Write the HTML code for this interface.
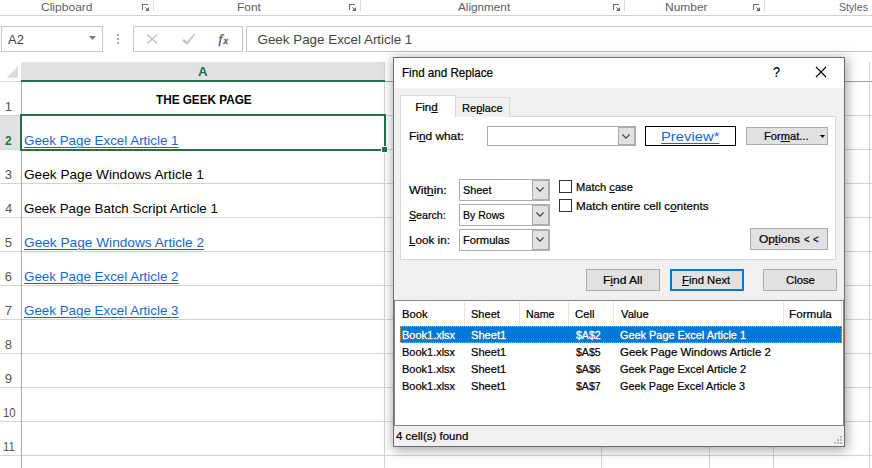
<!DOCTYPE html>
<html><head><meta charset="utf-8"><title>Excel Find and Replace</title>
<style>
html,body{margin:0;padding:0;overflow:hidden;}
body{width:872px;height:468px;overflow:hidden;background:#fff;position:relative;font-family:"Liberation Sans",sans-serif;}
.a{position:absolute;box-sizing:border-box;}
.t{position:absolute;white-space:nowrap;line-height:1;transform-origin:0 50%;font-family:"Liberation Sans",sans-serif;}
.t u{text-decoration:underline;text-underline-offset:0.5px;}
.hl{position:absolute;height:1px;background:#d4d4d4;}
.vl{position:absolute;width:1px;background:#d4d4d4;}
.btn{position:absolute;box-sizing:border-box;background:#e1e1e1;border:1px solid #adadad;}
.combo{position:absolute;box-sizing:border-box;background:#fff;border:1px solid #abadb3;}
.cbtn{position:absolute;box-sizing:border-box;background:#e1e1e1;border:1px solid #adadad;}
.chk{position:absolute;box-sizing:border-box;width:13px;height:13px;background:#fff;border:1px solid #333;}
svg{position:absolute;overflow:visible;}

</style></head>
<body>
<!-- ribbon strip -->
<div class="hl" style="left:0;top:15px;width:872px;background:#d2d2d2"></div>
<div class="vl" style="left:153px;top:0;height:11px;background:#dcdcdc"></div>
<div class="vl" style="left:360px;top:0;height:11px;background:#dcdcdc"></div>
<div class="vl" style="left:624px;top:0;height:11px;background:#dcdcdc"></div>
<div class="vl" style="left:764px;top:0;height:11px;background:#dcdcdc"></div>
<svg style="left:142px;top:4px" width="8" height="8" viewBox="0 0 8 8"><rect x="0" y="0" width="6" height="1" fill="#6a6a6a"/><rect x="0" y="0" width="1" height="6" fill="#6a6a6a"/><path d="M7 3V7H3Z" fill="#6a6a6a"/><path d="M3.3 3.3L6 6" stroke="#6a6a6a" stroke-width="1" fill="none"/></svg>
<svg style="left:349px;top:4px" width="8" height="8" viewBox="0 0 8 8"><rect x="0" y="0" width="6" height="1" fill="#6a6a6a"/><rect x="0" y="0" width="1" height="6" fill="#6a6a6a"/><path d="M7 3V7H3Z" fill="#6a6a6a"/><path d="M3.3 3.3L6 6" stroke="#6a6a6a" stroke-width="1" fill="none"/></svg>
<svg style="left:613px;top:4px" width="8" height="8" viewBox="0 0 8 8"><rect x="0" y="0" width="6" height="1" fill="#6a6a6a"/><rect x="0" y="0" width="1" height="6" fill="#6a6a6a"/><path d="M7 3V7H3Z" fill="#6a6a6a"/><path d="M3.3 3.3L6 6" stroke="#6a6a6a" stroke-width="1" fill="none"/></svg>
<svg style="left:753px;top:4px" width="8" height="8" viewBox="0 0 8 8"><rect x="0" y="0" width="6" height="1" fill="#6a6a6a"/><rect x="0" y="0" width="1" height="6" fill="#6a6a6a"/><path d="M7 3V7H3Z" fill="#6a6a6a"/><path d="M3.3 3.3L6 6" stroke="#6a6a6a" stroke-width="1" fill="none"/></svg>

<!-- formula bar -->
<div class="a" style="left:1px;top:26px;width:102px;height:26px;border:1px solid #c6c6c6;background:#fff"></div>
<svg style="left:89px;top:36px" width="8" height="4" viewBox="0 0 8 4"><path d="M0 0H7L3.5 3.9Z" fill="#777"/></svg>
<div class="a" style="left:117px;top:34px;width:2px;height:2px;background:#a6a6a6"></div>
<div class="a" style="left:117px;top:38px;width:2px;height:2px;background:#a6a6a6"></div>
<div class="a" style="left:117px;top:42px;width:2px;height:2px;background:#a6a6a6"></div>
<div class="a" style="left:133px;top:26px;width:110px;height:26px;border:1px solid #c6c6c6;background:#fff"></div>
<svg style="left:147px;top:34px" width="11" height="10" viewBox="0 0 11 10"><path d="M0.3 0.5L10 9.5M10 0.5L0.3 9.5" fill="none" stroke="#c4c4c4" stroke-width="1.7"/></svg>
<svg style="left:181px;top:33px" width="15" height="12" viewBox="0 0 15 12"><path d="M1 8L2.9 5.9L6 8.8L13.2 0.6L14.2 1.5L6.3 11.8Z" fill="#c4c4c4"/></svg>
<span class="t" style="left:218.5px;top:31.5px;font-family:'Liberation Serif',serif;font-style:italic;font-size:13.5px;color:#5a5a5a;-webkit-text-stroke:0.4px #5a5a5a">f</span>
<span class="t" style="left:223.5px;top:36px;font-family:'Liberation Serif',serif;font-style:italic;font-size:10px;color:#5a5a5a;-webkit-text-stroke:0.4px #5a5a5a">x</span>
<div class="a" style="left:246px;top:26px;width:626px;height:26px;border:1px solid #c6c6c6;border-right:none;background:#fff"></div>

<!-- sheet -->
<div class="a" style="left:21px;top:62px;width:364px;height:18px;background:#e1e1e1"></div>
<svg style="left:6px;top:66px" width="12" height="12" viewBox="0 0 12 12"><path d="M12 0.3V11.8H0.5Z" fill="#dcdcdc"/></svg>
<div class="a" style="left:0;top:116px;width:21px;height:34px;background:#e1e1e1"></div>
<!-- grid horizontal -->
<div class="hl" style="left:0;top:81px;width:21px;"></div>
<div class="hl" style="left:385px;top:81px;width:487px;background:#a0a0a0"></div>
<div class="hl" style="left:0;top:115px;width:872px;"></div>
<div class="hl" style="left:0;top:149px;width:872px;"></div>
<div class="hl" style="left:0;top:183px;width:872px;"></div>
<div class="hl" style="left:0;top:217px;width:872px;"></div>
<div class="hl" style="left:0;top:251px;width:872px;"></div>
<div class="hl" style="left:0;top:285px;width:872px;"></div>
<div class="hl" style="left:0;top:319px;width:872px;"></div>
<div class="hl" style="left:0;top:353px;width:872px;"></div>
<div class="hl" style="left:0;top:387px;width:872px;"></div>
<div class="hl" style="left:0;top:421px;width:872px;"></div>
<div class="hl" style="left:0;top:455px;width:872px;"></div>
<!-- grid vertical -->
<div class="vl" style="left:21px;top:82px;height:386px;background:#ababab"></div>
<div class="vl" style="left:384px;top:62px;height:406px;"></div>
<div class="vl" style="left:601px;top:62px;height:406px;"></div>
<div class="vl" style="left:709px;top:62px;height:406px;"></div>
<div class="vl" style="left:773px;top:62px;height:406px;"></div>
<div class="vl" style="left:869px;top:62px;height:406px;"></div>
<!-- col header green line -->
<div class="a" style="left:21px;top:80px;width:364px;height:2px;background:#217346"></div>
<!-- selection -->
<div class="a" style="left:20px;top:114px;width:366px;height:37px;border:2px solid #217346;"></div>
<div class="a" style="left:381px;top:146px;width:7px;height:7px;background:#217346;border:1px solid #fff"></div>

<!-- dialog shadow + frame -->
<div class="a" style="left:393px;top:57px;width:452px;height:390px;background:#f0f0f0;border:1px solid #6e6e6e;box-shadow:1px 2px 11px 1px rgba(0,0,0,0.36)"></div>
<div class="a" style="left:394px;top:58px;width:450px;height:30px;background:#fff"></div>
<svg style="left:816px;top:67px" width="10" height="10" viewBox="0 0 10 10"><path d="M0 0L10 10M10 0L0 10" fill="none" stroke="#000" stroke-width="1.1"/></svg>
<!-- tab panel -->
<div class="a" style="left:400px;top:116px;width:436px;height:144px;background:#fff;border:1px solid #d9d9d9"></div>
<div class="a" style="left:455px;top:97px;width:55px;height:20px;background:#f0f0f0;border:1px solid #d9d9d9;border-bottom:none"></div>
<div class="a" style="left:400px;top:95px;width:56px;height:22px;background:#fff;border:1px solid #d9d9d9;border-bottom:none"></div>
<!-- find what combo -->
<div class="combo" style="left:487px;top:126px;width:149px;height:20px"></div>
<div class="cbtn" style="left:618px;top:127px;width:17px;height:18px"></div>
<svg style="left:622px;top:134px" width="8" height="5" viewBox="0 0 8 5"><path d="M0.4 0.5L4 4.1L7.6 0.5" fill="none" stroke="#404040" stroke-width="1.1"/></svg>
<!-- preview -->
<div class="a" style="left:645px;top:126px;width:91px;height:20px;background:#fff;border:1px solid #000"></div>
<!-- format button -->
<div class="btn" style="left:746px;top:127px;width:82px;height:18px"></div>
<svg style="left:820px;top:135px" width="5" height="3" viewBox="0 0 5 3"><path d="M0 0H5L2.5 2.9Z" fill="#000"/></svg>
<!-- combos -->
<div class="combo" style="left:459px;top:179px;width:91px;height:22px"></div>
<div class="cbtn" style="left:532px;top:180px;width:17px;height:20px"></div>
<svg style="left:536px;top:187px" width="8" height="5" viewBox="0 0 8 5"><path d="M0.4 0.5L4 4.1L7.6 0.5" fill="none" stroke="#404040" stroke-width="1.1"/></svg>
<div class="combo" style="left:459px;top:204px;width:91px;height:22px"></div>
<div class="cbtn" style="left:532px;top:205px;width:17px;height:20px"></div>
<svg style="left:536px;top:212px" width="8" height="5" viewBox="0 0 8 5"><path d="M0.4 0.5L4 4.1L7.6 0.5" fill="none" stroke="#404040" stroke-width="1.1"/></svg>
<div class="combo" style="left:459px;top:229px;width:91px;height:22px"></div>
<div class="cbtn" style="left:532px;top:230px;width:17px;height:20px"></div>
<svg style="left:536px;top:237px" width="8" height="5" viewBox="0 0 8 5"><path d="M0.4 0.5L4 4.1L7.6 0.5" fill="none" stroke="#404040" stroke-width="1.1"/></svg>
<!-- checkboxes -->
<div class="chk" style="left:559px;top:180px"></div>
<div class="chk" style="left:559px;top:199px"></div>
<!-- options -->
<div class="btn" style="left:750px;top:228px;width:78px;height:22px"></div>
<!-- bottom buttons -->
<div class="btn" style="left:586px;top:269px;width:74px;height:22px"></div>
<div class="btn" style="left:670px;top:269px;width:74px;height:22px;border:2px solid #0078d7"></div>
<div class="btn" style="left:763px;top:269px;width:74px;height:22px"></div>
<!-- result list -->
<div class="a" style="left:394px;top:300px;width:450px;height:126px;background:#fff;border:1px solid #828790"></div>
<div class="vl" style="left:464px;top:302px;height:24px;background:#e5e5e5"></div>
<div class="vl" style="left:519px;top:302px;height:24px;background:#e5e5e5"></div>
<div class="vl" style="left:568px;top:302px;height:24px;background:#e5e5e5"></div>
<div class="vl" style="left:613px;top:302px;height:24px;background:#e5e5e5"></div>
<div class="vl" style="left:783px;top:302px;height:24px;background:#e5e5e5"></div>
<div class="vl" style="left:841px;top:302px;height:24px;background:#e5e5e5"></div>
<div class="a" style="left:400px;top:326px;width:442px;height:17px;background:#0078d7;outline:1px dotted #ff9a3c;outline-offset:-1px"></div>
<!-- size grip -->
<svg style="left:833px;top:435px" width="10" height="10" viewBox="0 0 10 10"><g fill="#b8b8b8"><rect x="7" y="1" width="2" height="2"/><rect x="4" y="4" width="2" height="2"/><rect x="7" y="4" width="2" height="2"/><rect x="1" y="7" width="2" height="2"/><rect x="4" y="7" width="2" height="2"/><rect x="7" y="7" width="2" height="2"/></g></svg>

<div id="texts">
<span class="t" style="left:40.54px;top:2.00px;font-size:11.4px;color:#5e5e5e;transform:scaleX(1.0574);">Clipboard</span>
<span class="t" style="left:236.85px;top:2.00px;font-size:11.4px;color:#5e5e5e;transform:scaleX(1.0500);">Font</span>
<span class="t" style="left:458.00px;top:2.00px;font-size:11.4px;color:#5e5e5e;transform:scaleX(1.0294);">Alignment</span>
<span class="t" style="left:664.95px;top:2.00px;font-size:11.4px;color:#5e5e5e;transform:scaleX(1.0513);">Number</span>
<span class="t" style="left:839.07px;top:2.00px;font-size:11.4px;color:#5e5e5e;transform:scaleX(0.9333);">Styles</span>
<span class="t" style="left:8.30px;top:33.00px;font-size:13.2px;color:#444;transform:scaleX(0.9812);">A2</span>
<span class="t" style="left:257.50px;top:33.00px;font-size:13.4px;color:#444;transform:scaleX(1.0000);">Geek Page Excel Article 1</span>
<span class="t" style="left:198.20px;top:65.00px;font-size:13px;color:#217346;transform:scaleX(1.0222);font-weight:bold">A</span>
<span class="t" style="left:4.80px;top:100.00px;font-size:13px;color:#555;transform:scaleX(1.0000);">1</span>
<span class="t" style="left:5.40px;top:134.00px;font-size:13px;color:#217346;transform:scaleX(0.9286);font-weight:bold">2</span>
<span class="t" style="left:4.80px;top:168.00px;font-size:13px;color:#555;transform:scaleX(1.0000);">3</span>
<span class="t" style="left:5.00px;top:202.00px;font-size:13px;color:#555;transform:scaleX(1.0000);">4</span>
<span class="t" style="left:4.80px;top:236.00px;font-size:13px;color:#555;transform:scaleX(1.0000);">5</span>
<span class="t" style="left:4.80px;top:270.00px;font-size:13px;color:#555;transform:scaleX(1.0000);">6</span>
<span class="t" style="left:4.80px;top:304.00px;font-size:13px;color:#555;transform:scaleX(1.0000);">7</span>
<span class="t" style="left:4.80px;top:338.00px;font-size:13px;color:#555;transform:scaleX(1.0000);">8</span>
<span class="t" style="left:4.80px;top:372.00px;font-size:13px;color:#555;transform:scaleX(1.0000);">9</span>
<span class="t" style="left:2.52px;top:406.00px;font-size:13px;color:#555;transform:scaleX(0.8769);">10</span>
<span class="t" style="left:2.93px;top:440.00px;font-size:13px;color:#555;transform:scaleX(0.8667);">11</span>
<span class="t" style="left:155.60px;top:93.00px;font-size:13px;color:#000;transform:scaleX(0.9028);font-weight:bold">THE GEEK PAGE</span>
<span class="t" style="left:24.30px;top:134.00px;font-size:13.4px;color:#1868cc;transform:scaleX(0.9980);text-decoration:underline;text-underline-offset:2px;text-decoration-thickness:1px">Geek Page Excel Article 1</span>
<span class="t" style="left:24.28px;top:168.00px;font-size:13.4px;color:#000;transform:scaleX(1.0189);">Geek Page Windows Article 1</span>
<span class="t" style="left:24.30px;top:202.00px;font-size:13.4px;color:#000;transform:scaleX(0.9984);">Geek Page Batch Script Article 1</span>
<span class="t" style="left:24.28px;top:236.00px;font-size:13.4px;color:#1868cc;transform:scaleX(1.0211);text-decoration:underline;text-underline-offset:2px;text-decoration-thickness:1px">Geek Page Windows Article 2</span>
<span class="t" style="left:24.30px;top:270.00px;font-size:13.4px;color:#1868cc;transform:scaleX(0.9980);text-decoration:underline;text-underline-offset:2px;text-decoration-thickness:1px">Geek Page Excel Article 2</span>
<span class="t" style="left:24.30px;top:304.00px;font-size:13.4px;color:#1868cc;transform:scaleX(0.9980);text-decoration:underline;text-underline-offset:2px;text-decoration-thickness:1px">Geek Page Excel Article 3</span>
<span class="t" style="left:401.78px;top:67.00px;font-size:12.6px;color:#000;transform:scaleX(0.9227);-webkit-text-stroke:0.22px #000;">Find and Replace</span>
<span class="t" style="left:772.70px;top:65.00px;font-size:14px;color:#000;transform:scaleX(0.9000);-webkit-text-stroke:0.2px #000">?</span>
<span class="t" style="left:415.20px;top:101.00px;font-size:11.6px;color:#000;transform:scaleX(1.0000);-webkit-text-stroke:0.22px #000;">Fin<u>d</u></span>
<span class="t" style="left:461.55px;top:102.00px;font-size:11.6px;color:#000;transform:scaleX(0.9537);-webkit-text-stroke:0.22px #000;">Re<u>p</u>lace</span>
<span class="t" style="left:408.98px;top:130.00px;font-size:11.6px;color:#000;transform:scaleX(1.0231);-webkit-text-stroke:0.22px #000;">Fi<u>n</u>d what:</span>
<span class="t" style="left:660.70px;top:130.00px;font-size:13.5px;color:#1868cc;transform:scaleX(1.0962);text-decoration:underline;text-underline-offset:2px;text-decoration-thickness:1px">Preview*</span>
<span class="t" style="left:764.24px;top:130.00px;font-size:11.6px;color:#000;transform:scaleX(0.9600);-webkit-text-stroke:0.22px #000;">For<u>m</u>at...</span>
<span class="t" style="left:409.40px;top:184.00px;font-size:11.6px;color:#000;transform:scaleX(1.0657);-webkit-text-stroke:0.22px #000;">Wit<u>h</u>in:</span>
<span class="t" style="left:409.48px;top:209.00px;font-size:11.6px;color:#000;transform:scaleX(0.9158);-webkit-text-stroke:0.22px #000;"><u>S</u>earch:</span>
<span class="t" style="left:409.19px;top:234.00px;font-size:11.6px;color:#000;transform:scaleX(1.0077);-webkit-text-stroke:0.22px #000;"><u>L</u>ook in:</span>
<span class="t" style="left:462.66px;top:184.00px;font-size:11.6px;color:#000;transform:scaleX(0.9379);-webkit-text-stroke:0.22px #000;">Sheet</span>
<span class="t" style="left:462.69px;top:209.00px;font-size:11.6px;color:#000;transform:scaleX(0.9089);-webkit-text-stroke:0.22px #000;">By Rows</span>
<span class="t" style="left:462.63px;top:234.00px;font-size:11.6px;color:#000;transform:scaleX(0.9660);-webkit-text-stroke:0.22px #000;">Formulas</span>
<span class="t" style="left:576.04px;top:181.00px;font-size:11.6px;color:#000;transform:scaleX(0.9586);-webkit-text-stroke:0.22px #000;">Match <u>c</u>ase</span>
<span class="t" style="left:575.99px;top:200.00px;font-size:11.6px;color:#000;transform:scaleX(1.0077);-webkit-text-stroke:0.22px #000;">Match entire cell c<u>o</u>ntents</span>
<span class="t" style="left:758.50px;top:233.00px;font-size:11.6px;color:#000;transform:scaleX(1.0250);-webkit-text-stroke:0.22px #000;">Op<u>t</u>ions</span>
<span class="t" style="left:804.40px;top:233.00px;font-size:11.6px;color:#000;transform:scaleX(0.8333);-webkit-text-stroke:0.22px #000;">&lt;</span>
<span class="t" style="left:812.60px;top:233.00px;font-size:11.6px;color:#000;transform:scaleX(0.8333);-webkit-text-stroke:0.22px #000;">&lt;</span>
<span class="t" style="left:602.96px;top:274.00px;font-size:11.6px;color:#000;transform:scaleX(1.0351);-webkit-text-stroke:0.22px #000;">F<u>i</u>nd All</span>
<span class="t" style="left:682.03px;top:274.00px;font-size:11.6px;color:#000;transform:scaleX(0.9714);-webkit-text-stroke:0.22px #000;"><u>F</u>ind Next</span>
<span class="t" style="left:785.52px;top:274.00px;font-size:11.6px;color:#000;transform:scaleX(0.9750);-webkit-text-stroke:0.22px #000;">Close</span>
<span class="t" style="left:401.73px;top:308.00px;font-size:11.6px;color:#000;transform:scaleX(0.9680);-webkit-text-stroke:0.22px #000;">Book</span>
<span class="t" style="left:470.85px;top:308.00px;font-size:11.6px;color:#000;transform:scaleX(0.9517);-webkit-text-stroke:0.22px #000;">Sheet</span>
<span class="t" style="left:525.78px;top:308.00px;font-size:11.6px;color:#000;transform:scaleX(0.9233);-webkit-text-stroke:0.22px #000;">Name</span>
<span class="t" style="left:574.53px;top:308.00px;font-size:11.6px;color:#000;transform:scaleX(0.9737);-webkit-text-stroke:0.22px #000;">Cell</span>
<span class="t" style="left:620.60px;top:308.00px;font-size:11.6px;color:#000;transform:scaleX(0.9643);-webkit-text-stroke:0.22px #000;">Value</span>
<span class="t" style="left:789.29px;top:308.00px;font-size:11.6px;color:#000;transform:scaleX(1.0073);-webkit-text-stroke:0.22px #000;">Formula</span>
<span class="t" style="left:401.75px;top:329.00px;font-size:11.6px;color:#fff;-webkit-text-stroke:0.3px #fff;transform:scaleX(0.9473);">Book1.xlsx</span>
<span class="t" style="left:470.64px;top:329.00px;font-size:11.6px;color:#fff;-webkit-text-stroke:0.3px #fff;transform:scaleX(0.9571);">Sheet1</span>
<span class="t" style="left:575.50px;top:329.00px;font-size:11.6px;color:#fff;-webkit-text-stroke:0.3px #fff;transform:scaleX(0.9111);">$A$2</span>
<span class="t" style="left:619.66px;top:329.00px;font-size:11.6px;color:#fff;-webkit-text-stroke:0.3px #fff;transform:scaleX(0.9402);">Geek Page Excel Article 1</span>
<span class="t" style="left:401.75px;top:346.00px;font-size:11.6px;color:#000;transform:scaleX(0.9473);-webkit-text-stroke:0.22px #000;">Book1.xlsx</span>
<span class="t" style="left:470.64px;top:346.00px;font-size:11.6px;color:#000;transform:scaleX(0.9571);-webkit-text-stroke:0.22px #000;">Sheet1</span>
<span class="t" style="left:575.50px;top:346.00px;font-size:11.6px;color:#000;transform:scaleX(0.9111);-webkit-text-stroke:0.22px #000;">$A$5</span>
<span class="t" style="left:619.61px;top:346.00px;font-size:11.6px;color:#000;transform:scaleX(0.9874);-webkit-text-stroke:0.22px #000;">Geek Page Windows Article 2</span>
<span class="t" style="left:401.75px;top:363.00px;font-size:11.6px;color:#000;transform:scaleX(0.9473);-webkit-text-stroke:0.22px #000;">Book1.xlsx</span>
<span class="t" style="left:470.64px;top:363.00px;font-size:11.6px;color:#000;transform:scaleX(0.9571);-webkit-text-stroke:0.22px #000;">Sheet1</span>
<span class="t" style="left:575.50px;top:363.00px;font-size:11.6px;color:#000;transform:scaleX(0.9111);-webkit-text-stroke:0.22px #000;">$A$6</span>
<span class="t" style="left:619.66px;top:363.00px;font-size:11.6px;color:#000;transform:scaleX(0.9402);-webkit-text-stroke:0.22px #000;">Geek Page Excel Article 2</span>
<span class="t" style="left:401.75px;top:380.00px;font-size:11.6px;color:#000;transform:scaleX(0.9473);-webkit-text-stroke:0.22px #000;">Book1.xlsx</span>
<span class="t" style="left:470.64px;top:380.00px;font-size:11.6px;color:#000;transform:scaleX(0.9571);-webkit-text-stroke:0.22px #000;">Sheet1</span>
<span class="t" style="left:575.50px;top:380.00px;font-size:11.6px;color:#000;transform:scaleX(0.9111);-webkit-text-stroke:0.22px #000;">$A$7</span>
<span class="t" style="left:619.67px;top:380.00px;font-size:11.6px;color:#000;transform:scaleX(0.9331);-webkit-text-stroke:0.22px #000;">Geek Page Excel Article 3</span>
<span class="t" style="left:396.00px;top:430.00px;font-size:11.6px;color:#000;transform:scaleX(0.9931);-webkit-text-stroke:0.22px #000;">4 cell(s) found</span>
</div>
</body></html>
